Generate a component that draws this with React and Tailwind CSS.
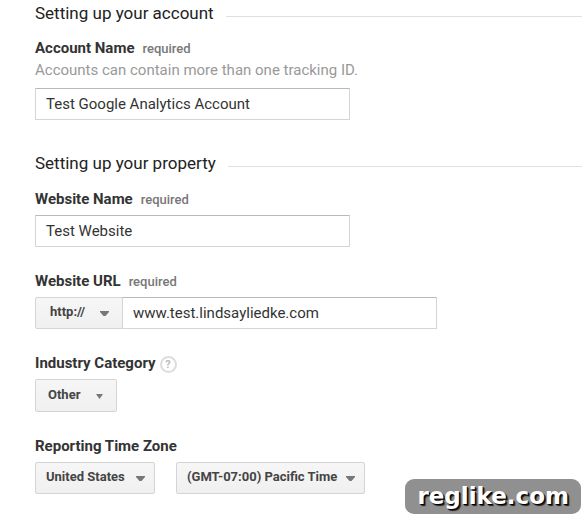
import React from 'react';
import clsx from 'clsx';

const SectionTitle = ({ children }) => (
  <div className="flex items-center gap-3">
    <h2 className="text-[17px] leading-6 text-[#222]">{children}</h2>
    <hr className="mt-1.5 flex-1 border-[#e0e0e0]" />
  </div>
);

const FieldLabel = ({ htmlFor, required, children }) => (
  <div className="flex h-5 items-baseline gap-2 leading-5">
    <label htmlFor={htmlFor} className="text-[15px] font-bold text-[#333]">{children}</label>
    {required && <span className="text-[13px] font-medium text-[#777]">required</span>}
  </div>
);

const TextInput = ({ id, value }) => (
  <input
    id={id}
    type="text"
    defaultValue={value}
    className="h-8 w-full max-w-[315px] rounded-[1px] border border-[#d5d5d5] border-t-[#b9b9b9] bg-white px-2.5 text-[15px] text-[#333] outline-none focus:border-blue-500"
  />
);

const SelectBox = ({ id, label, options, className, arrowClassName, small }) => (
  <div className="grid shrink-0 items-center">
    <select
      id={id}
      aria-label={label}
      className={clsx(
        'col-start-1 row-start-1 appearance-none rounded-xs border border-[#d4d4d4] bg-linear-to-b from-[#f6f6f6] to-[#f0f0f0] pb-0.5 text-[13px] font-bold text-[#444] outline-none',
        className
      )}
    >
      {options.map((option) => (
        <option key={option}>{option}</option>
      ))}
    </select>
    <svg
      className={clsx('pointer-events-none col-start-1 row-start-1 justify-self-end fill-[#777]', arrowClassName)}
      width="9"
      height="6"
      viewBox="0 0 9 6"
      aria-hidden="true"
    >
      <path d={small ? 'M1 1h7L4.5 6z' : 'M0 1h9v1L5.5 6h-2L0 2z'} />
    </svg>
  </div>
);

const App = () => {
  return (
    <div className="relative bg-white font-[Roboto,sans-serif]">
      <form className="pt-px pb-[26px] pl-[35px]" onSubmit={(e) => e.preventDefault()}>
        <section>
          <SectionTitle>Setting up your account</SectionTitle>
          <div className="mt-[13px] flex flex-col">
            <FieldLabel htmlFor="account-name" required>Account Name</FieldLabel>
            <p className="mt-0.5 mb-2 text-[15px] leading-5 text-[#999]">
              Accounts can contain more than one tracking ID.
            </p>
            <TextInput id="account-name" value="Test Google Analytics Account" />
          </div>
        </section>

        <section className="mt-[31px]">
          <SectionTitle>Setting up your property</SectionTitle>
          <div className="mt-3.5 flex flex-col gap-6">
            <div className="flex flex-col gap-1.5">
              <FieldLabel htmlFor="website-name" required>Website Name</FieldLabel>
              <TextInput id="website-name" value="Test Website" />
            </div>

            <div className="flex flex-col gap-1.5">
              <FieldLabel htmlFor="website-url" required>Website URL</FieldLabel>
              <div className="flex -space-x-px">
                <SelectBox
                  label="Protocol"
                  options={['http://', 'https://']}
                  className="h-8 w-22 pl-3.5"
                  arrowClassName="mr-3.5"
                />
                <TextInput id="website-url" value="www.test.lindsayliedke.com" />
              </div>
            </div>

            <div className="flex flex-col gap-1.5">
              <div className="flex h-5 items-center gap-1">
                <FieldLabel htmlFor="industry">Industry Category</FieldLabel>
                <button
                  type="button"
                  aria-label="Help"
                  className="mt-0.5 size-[17px] rounded-full border-2 border-[#ddd] text-[11px] leading-[13px] font-bold text-[#bbb]"
                >
                  ?
                </button>
              </div>
              <div className="flex">
                <SelectBox
                  id="industry"
                  options={['Other', 'Finance', 'Games', 'Travel']}
                  className="h-[33px] w-[82px] pl-3"
                  arrowClassName="mr-[13px]"
                  small
                />
              </div>
            </div>

            <div className="flex flex-col gap-1.5">
              <FieldLabel htmlFor="country">Reporting Time Zone</FieldLabel>
              <div className="flex gap-[21px]">
                <SelectBox
                  id="country"
                  options={['United States', 'Canada', 'Mexico']}
                  className="h-8 w-[120px] pl-2.5"
                  arrowClassName="mr-2.5"
                />
                <SelectBox
                  label="Time zone"
                  options={['(GMT-07:00) Pacific Time', '(GMT-05:00) Eastern Time']}
                  className="h-8 w-[189px] pl-2.5"
                  arrowClassName="mr-2.5"
                />
              </div>
            </div>
          </div>
        </section>
      </form>

      <div className="absolute right-px bottom-1.5 rounded-[9px] bg-[#909090] px-3 font-['DejaVu_Sans',sans-serif] text-[23px] leading-[35px] font-bold text-white [text-shadow:1px_1px_0_#000,2px_2px_1px_#222]">
        reglike.com
      </div>
    </div>
  );
};

export default App;
